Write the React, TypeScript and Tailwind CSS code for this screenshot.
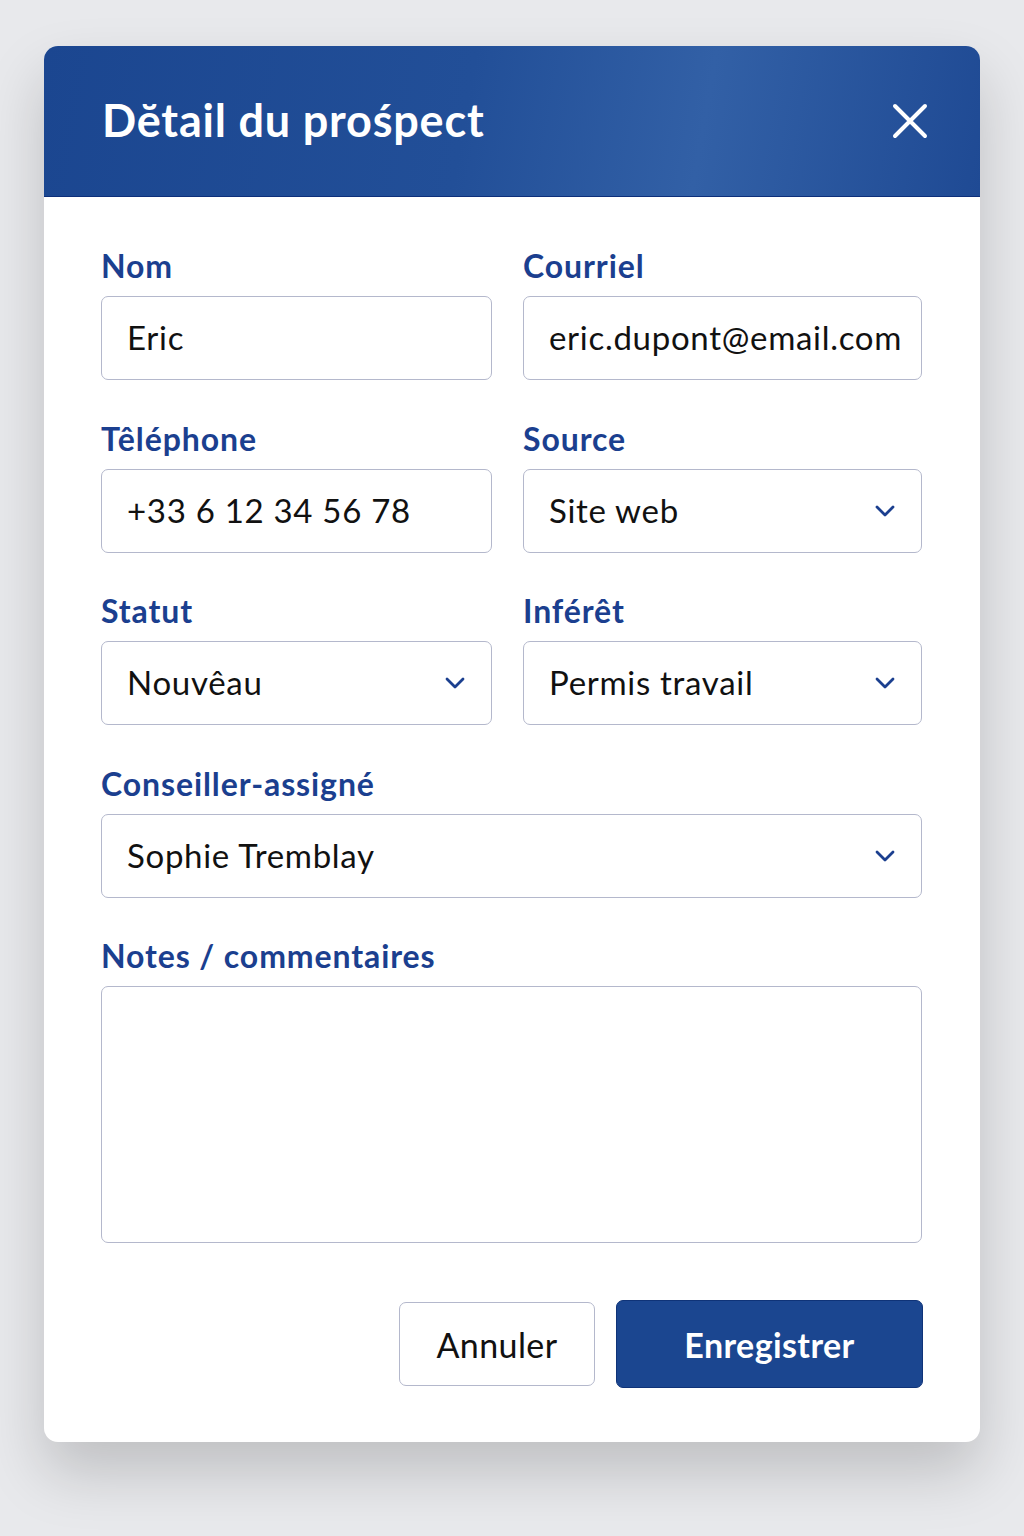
import React from "react";

// Champ de saisie simple (label + boîte)
function Field({ label, value, select, className }: { label: string; value: string; select?: boolean; className?: string }) {
  return (
    <div className={"flex flex-col " + (className ?? "")}>
      <label className="text-[32px] leading-[36px] font-bold text-[#1b3f8f] mb-[12px] tracking-[0.9px]">{label}</label>
      <div className="h-[84px] rounded-[7px] border border-[#b4b8cc] bg-white flex items-center justify-between pl-[25px] pr-[26px]">
        <span className="text-[33px] text-[#111] tracking-[0.7px]">{value}</span>
        {select && (
          <svg width="20" height="12" viewBox="0 0 20 12" fill="none">
            <path d="M2 2l8 8 8-8" stroke="#1b3f8f" strokeWidth="2.8" strokeLinecap="round" strokeLinejoin="round" />
          </svg>
        )}
      </div>
    </div>
  );
}

export default function App() {
  return (
    <div className="min-h-[1536px] w-full bg-[#e8e9ec] pt-[46px] px-[44px] font-['Lato','Noto_Sans',sans-serif]">
      <div className="w-[936px] rounded-[14px] bg-white overflow-hidden shadow-[0_30px_60px_rgba(0,0,0,0.18)]">
        {/* En-tête */}
        <div className="h-[151px] bg-[linear-gradient(100deg,#1b4690_0%,#224f98_45%,#3260a6_70%,#1f4a94_100%)] flex items-center justify-between pl-[58px] pr-[52px] border-b border-[#0d2f7a]">
          <h2 className="text-[45px] font-bold text-white tracking-[0.8px]">Dĕtail du prośpect</h2>
          <svg width="36" height="36" viewBox="0 0 36 36" fill="none">
            <path d="M3 3l30 30M33 3L3 33" stroke="white" strokeWidth="4" strokeLinecap="round" />
          </svg>
        </div>

        {/* Formulaire */}
        <div className="px-[57px] pt-[51px] pb-[54px]">
          <div className="grid grid-cols-[391px_399px] gap-x-[31px] gap-y-[40.5px]">
            <Field label="Nom" value="Eric" />
            <Field label="Courriel" value="eric.dupont@email.com" />
            <Field label="Têléphone" value="+33 6 12 34 56 78" />
            <Field label="Source" value="Site web" select />
            <Field label="Statut" value="Nouvêau" select />
            <Field label="Inférêt" value="Permis travail" select />
            <Field label="Conseiller-assigné" value="Sophie Tremblay" select className="col-span-2" />
            <div className="col-span-2 flex flex-col">
              <label className="text-[32px] leading-[36px] font-bold text-[#1b3f8f] mb-[12px] tracking-[0.9px]">Notes / commentaires</label>
              <div className="h-[257px] rounded-[7px] border border-[#b4b8cc] bg-white" />
            </div>
          </div>

          <div className="flex justify-end items-center gap-[21px] mt-[57px]">
            <button className="w-[196px] h-[84px] rounded-[7px] border border-[#b4b8cc] bg-white text-[34px] text-[#111] tracking-[0.4px]">Annuler</button>
            <button className="w-[307px] h-[88px] rounded-[7px] bg-[#1b4690] border border-[#0f3378] text-[34px] font-bold text-white tracking-[0.4px]">Enregistrer</button>
          </div>
        </div>
      </div>
    </div>
  );
}
